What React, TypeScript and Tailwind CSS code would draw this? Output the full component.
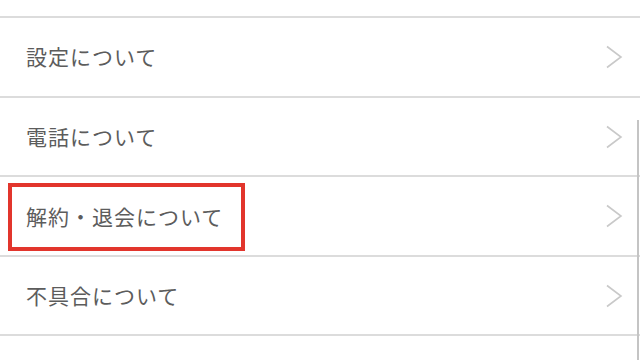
const rows = [
  { label: "設定について", h: "h-[78px]" },
  { label: "電話について", h: "h-[77px]" },
  { label: "解約・退会について", h: "h-[78px]", marked: true },
  { label: "不具合について", h: "h-[77px]" },
];

function Chevron() {
  return (
    <svg width="18" height="24" viewBox="0 0 18 24" fill="none">
      <polyline
        points="2,1.5 16,12 2,22.5"
        stroke="#c9c9c9"
        strokeWidth="1.6"
        strokeLinejoin="miter"
      />
    </svg>
  );
}

export default function App() {
  return (
    <div
      className="relative w-[640px] h-[360px] overflow-hidden bg-white"
      style={{ fontFamily: '"Noto Sans CJK JP", "Noto Sans", sans-serif' }}>
      <div className="h-[16px]" />
      <ul className="border-t-2 border-[#dcdcdc]">
        {rows.map((row, i) => (
          <li
            key={i}
            className={`${row.h} box-content border-b-2 border-[#dcdcdc] flex items-center justify-between pr-[17px]`}>
            {row.marked ? (
              <div className="ml-[8px] mt-[2px] h-[68px] w-[237px] border-4 border-[#e2352c] flex items-center pl-[14px] text-[21px] tracking-[1px] text-[#5c5c5c]">
                {row.label}
              </div>
            ) : (
              <span className="pl-[26px] text-[21px] tracking-[1px] text-[#5c5c5c]">
                {row.label}
              </span>
            )}
            <Chevron />
          </li>
        ))}
      </ul>
      {/* scroll indicator */}
      <div className="absolute right-[1px] top-[120px] bottom-0 w-[2px] bg-[#c4c4c4]" />
    </div>
  );
}
